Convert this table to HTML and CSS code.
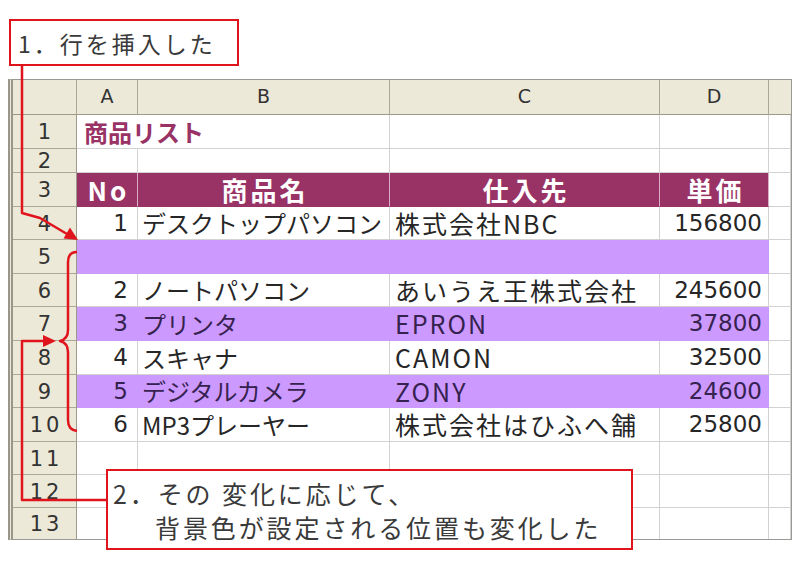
FILE: index.html
```html
<!DOCTYPE html>
<html lang="ja">
<head>
<meta charset="utf-8">
<title>商品リスト</title>
<link rel="stylesheet" href="styles.css">
</head>
<body>
<div class="canvas">
  <div class="sheet">
    <div class="hd corner"></div><div class="hd">A</div><div class="hd">B</div><div class="hd">C</div><div class="hd">D</div><div class="hd last"></div>

    <div class="rh">1</div><div class="c title">商品リスト</div><div class="c"></div><div class="c"></div><div class="c"></div>
    <div class="rh">2</div><div class="c"></div><div class="c"></div><div class="c"></div><div class="c"></div><div class="c"></div>
    <div class="rh">3</div><div class="c mr">No</div><div class="c mr">商品名</div><div class="c mr">仕入先</div><div class="c mr">単価</div><div class="c"></div>

    <div class="rh">4</div><div class="c n">1</div><div class="c">デスクトップパソコン</div><div class="c cc">株式会社NBC</div><div class="c n d">156800</div><div class="c"></div>
    <div class="rh">5</div><div class="c pu"></div><div class="c pu"></div><div class="c pu"></div><div class="c pu"></div><div class="c"></div>
    <div class="rh">6</div><div class="c n">2</div><div class="c">ノートパソコン</div><div class="c cc">あいうえ王株式会社</div><div class="c n d">245600</div><div class="c"></div>
    <div class="rh">7</div><div class="c n pu">3</div><div class="c pu">プリンタ</div><div class="c cc pu">EPRON</div><div class="c n d pu">37800</div><div class="c"></div>
    <div class="rh">8</div><div class="c n">4</div><div class="c">スキャナ</div><div class="c cc">CAMON</div><div class="c n d">32500</div><div class="c"></div>
    <div class="rh">9</div><div class="c n pu">5</div><div class="c pu">デジタルカメラ</div><div class="c cc pu">ZONY</div><div class="c n d pu">24600</div><div class="c"></div>
    <div class="rh">10</div><div class="c n">6</div><div class="c">MP3プレーヤー</div><div class="c cc">株式会社はひふへ舗</div><div class="c n d">25800</div><div class="c"></div>
    <div class="rh">11</div><div class="c"></div><div class="c"></div><div class="c"></div><div class="c"></div><div class="c"></div>
    <div class="rh">12</div><div class="c"></div><div class="c"></div><div class="c"></div><div class="c"></div><div class="c"></div>
    <div class="rh">13</div><div class="c"></div><div class="c"></div><div class="c"></div><div class="c"></div><div class="c"></div>
  </div>

  <svg class="arrows" width="800" height="570" viewBox="0 0 800 570">
    <g fill="none" stroke="#e0141c" stroke-width="2.5" stroke-linejoin="round">
      <polyline points="22,66 22,213 40,218 67,234"/>
      <path d="M77 252 Q68 252 68 262 V330 Q68 339 60 341 Q68 343 68 352 V420 Q68 430 77 431"/>
      <polyline points="106,500 22,500 22,341 46,341"/>
    </g>
    <g fill="#e0141c">
      <polygon points="78,240 63.5,238.5 70,227.5"/>
      <polygon points="56,341 43,335 43,347"/>
    </g>
  </svg>

  <div class="callout c1">1．行を挿入した</div>
  <div class="callout c2"><span class="line">2．その 変化に応じて、</span><span class="line l2">背景色が設定される位置も変化した</span></div>
</div>
</body>
</html>
```

FILE: styles.css
```css
body {
  margin: 0;
  background: #fff;
}

.canvas {
  position: relative;
  width: 800px;
  height: 570px;
  overflow: hidden;
  background: #fff;
}

.sheet {
  display: grid;
  grid-template-columns: 64px 61px 252px 270px 109px 22px;
  grid-template-rows: 35px 34px 24px 34px 33px 34px 33px 34px 34px 33px 34px 33px 33px 31px;
  box-sizing: border-box;
  width: 784px;
  margin: 79px 0 0 8px;
  border: 1px solid #9a9a94;
  border-left: 5px double #9a978a;
  background: #ece9d8;
}

.sheet > div {
  box-sizing: border-box;
  display: flex;
  align-items: center;
  min-width: 0;
  white-space: nowrap;
  line-height: 1.15;
  background: #fff;
  border-right: 1px solid #d2d2d2;
  border-bottom: 1px solid #d2d2d2;
}

.sheet > div:nth-last-child(-n+6) {
  border-bottom: 0;
}

.sheet > .hd,
.sheet > .rh {
  background: #ece9d8;
  border-color: #aca899;
  justify-content: center;
  font-family: "DejaVu Sans", sans-serif;
  color: #333;
}

.sheet > .hd {
  font-size: 19px;
  border-bottom-color: #9d9a8c;
}

.sheet > .hd.last {
  border-right: 0;
}

.sheet > .rh {
  font-size: 21px;
  line-height: 1;
  letter-spacing: 3px;
  padding: 2px 0 0 3px;
  border-right-color: #9d9a8c;
}

.c {
  font-family: "Noto Sans CJK JP", sans-serif;
  font-size: 24px;
  color: #262626;
  padding-left: 4px;
}

.sheet > .c:nth-child(6n) {
  border-right: 0;
}

.c.n {
  justify-content: flex-end;
  font-family: "DejaVu Sans", "Noto Sans CJK JP", sans-serif;
  font-size: 23px;
  padding: 0 9px 0 0;
}

.c.n.d {
  padding-right: 6px;
}

.c.cc {
  font-size: 25px;
  letter-spacing: 2px;
  padding-left: 5px;
}

.c.title {
  grid-column: span 2;
  font-weight: 700;
  color: #993366;
  padding-left: 7px;
}

.sheet > .mr {
  background: #993366;
  color: #fff;
  font-size: 26px;
  font-weight: 700;
  justify-content: center;
  letter-spacing: 3px;
  padding: 0 0 0 3px;
  border-right: 1px solid #dcaec6;
  border-bottom-color: #993366;
}

.sheet > .pu {
  background: #cc99ff;
  color: #36224f;
  border-right-color: #cc99ff;
  border-bottom-color: #cc99ff;
}

.arrows {
  position: absolute;
  left: 0;
  top: 0;
  pointer-events: none;
}

.callout {
  position: absolute;
  box-sizing: border-box;
  border: 2px solid #e0141c;
  background: #fff;
  font-family: "Noto Sans CJK JP", sans-serif;
  color: #3a3a3a;
  white-space: nowrap;
}

.c1 {
  left: 9px;
  top: 19px;
  width: 230px;
  height: 47px;
  display: flex;
  align-items: center;
  padding-left: 7px;
  font-size: 23px;
  letter-spacing: 3px;
}

.c2 {
  left: 106px;
  top: 469px;
  width: 527px;
  height: 81px;
  padding: 5px 0 0 5px;
  font-size: 25px;
  line-height: 34px;
  letter-spacing: 2.9px;
}

.c2 .line {
  display: block;
}

.c2 .l2 {
  padding-left: 42px;
}
```
